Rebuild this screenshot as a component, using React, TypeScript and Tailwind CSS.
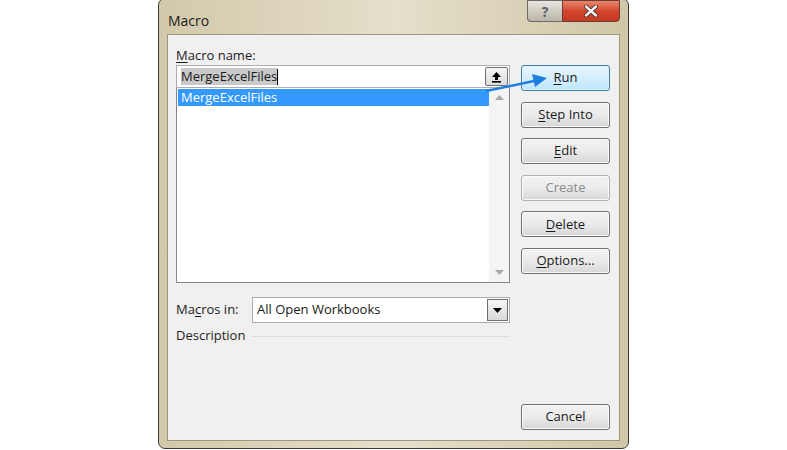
import React from 'react';

const font = { fontFamily: '"Open Sans", "Noto Sans", "Liberation Sans", sans-serif' };

const Btn = ({ children, primary, disabled }: { children: React.ReactNode; primary?: boolean; disabled?: boolean }) => (
  <div
    className={`h-[26px] w-[89px] rounded-[3px] border flex items-center justify-center text-[13px] ${
      primary
        ? 'border-[#3c7fb1] bg-gradient-to-b from-[#eaf6fd] to-[#bee6fd] shadow-[inset_0_0_0_1px_#dff2fc]'
        : 'border-[#707070] bg-gradient-to-b from-[#f2f2f2] via-[#ebebeb] to-[#d6d6d6] shadow-[inset_0_0_0_1px_#fafafa]'
    } ${disabled ? 'text-[#8a8a8a] border-[#adb2b5]' : 'text-[#1a1a1a]'}`}
  >
    {children}
  </div>
);

const U = ({ children }: { children: React.ReactNode }) => <span className="underline underline-offset-2">{children}</span>;

export default function App() {
  return (
    <div className="w-[787px] h-[450px] bg-white relative overflow-hidden" style={font}>
      <div className="absolute left-[158px] top-[-2px] w-[471px] h-[451px] rounded-[7px] border border-[#3a3a3a] bg-gradient-to-r from-[#d2c9ab] via-[#e6dfca] to-[#d0c7a8] flex flex-col">
        {/* title bar */}
        <div className="h-[35px] flex items-start justify-between pl-[9px] pr-[8px]">
          <div className="text-[14px] text-[#1b1b1b] mt-[11px]">Macro</div>
          <div className="flex mt-[1px]">
            <div className="w-[35px] h-[22px] rounded-bl-[4px] border border-[#6c6c6c] border-r-0 bg-gradient-to-b from-[#e8e6e0] to-[#b9b4a6] flex items-center justify-center text-[14px] font-bold text-[#5a5f6a]">?</div>
            <div className="w-[58px] h-[22px] rounded-br-[4px] border border-[#6c3a30] bg-gradient-to-b from-[#e8866c] via-[#d2462c] to-[#c43a22] flex items-center justify-center">
              <svg width="16" height="12" viewBox="0 0 16 12">
                <path d="M3 1.5 L13 10.5 M13 1.5 L3 10.5" stroke="#3a2a2a" strokeWidth="4" strokeLinecap="round" />
                <path d="M3 1.5 L13 10.5 M13 1.5 L3 10.5" stroke="#f4f4f4" strokeWidth="2.4" strokeLinecap="round" />
              </svg>
            </div>
          </div>
        </div>
        {/* client */}
        <div className="mx-[8px] h-[407px] border border-[#9c977f] bg-[#f0f0f0] flex gap-[11px] pl-[8px] pt-[10px] text-[13px] text-[#1a1a1a]">
          <div className="w-[334px] flex flex-col">
            <div className="h-[20px] leading-[20px]"><U>M</U>acro name:</div>
            <div className="h-[23px] border border-[#abadb3] bg-white flex items-center justify-between pl-[4px] pr-[1px]">
              <div className="flex items-center">
                <span className="bg-[#c9c9c9] leading-[17px]">MergeExcelFiles</span>
                <span className="w-[1px] h-[16px] bg-black" />
              </div>
              <div className="w-[23px] h-[19px] border border-[#707070] rounded-[2px] bg-gradient-to-b from-[#f6f6f6] to-[#dcdcdc] flex items-center justify-center">
                <svg width="11" height="12" viewBox="0 0 11 12">
                  <path d="M5.5 1 L10 6 H7 V9 H4 V6 H1 Z" fill="#000" />
                  <rect x="1" y="10" width="9" height="1.6" fill="#000" />
                </svg>
              </div>
            </div>
            <div className="h-[195px] border border-[#828790] border-t-0 bg-white flex">
              <div className="flex-1 pt-[1px] pl-[1px]">
                <div className="h-[17px] bg-[#3399ff] text-white leading-[17px] pl-[3px]">MergeExcelFiles</div>
              </div>
              <div className="w-[20px] bg-[#f4f4f4] flex flex-col items-center justify-between py-[7px]">
                <svg width="9" height="5" viewBox="0 0 9 5"><path d="M0 5 L4.5 0 L9 5 Z" fill="#a8a8a8" /></svg>
                <svg width="9" height="5" viewBox="0 0 9 5"><path d="M0 0 L4.5 5 L9 0 Z" fill="#a8a8a8" /></svg>
              </div>
            </div>
            <div className="mt-[14px] h-[26px] flex items-center">
              <div className="w-[76px]">Ma<U>c</U>ros in:</div>
              <div className="flex-1 h-[26px] border border-[#abadb3] bg-white flex items-center justify-between pl-[4px] pr-[1px]">
                <span>All Open Workbooks</span>
                <div className="w-[21px] h-[22px] border border-[#707070] bg-gradient-to-b from-[#f6f6f6] to-[#d8d8d8] flex items-center justify-center">
                  <svg width="9" height="5" viewBox="0 0 9 5"><path d="M0 0 L4.5 5 L9 0 Z" fill="#000" /></svg>
                </div>
              </div>
            </div>
            <div className="mt-[3px] h-[20px] flex items-center">
              <span className="text-[#1e1e1e]">Description</span>
              <div className="flex-1 ml-[6px] h-[1px] bg-[#d5dfe5]" />
            </div>
          </div>
          <div className="w-[89px] flex flex-col pt-[20px]">
            <div className="flex flex-col gap-[10.6px]">
              <Btn primary><U>R</U>un</Btn>
              <Btn><U>S</U>tep Into</Btn>
              <Btn><U>E</U>dit</Btn>
              <Btn disabled>Create</Btn>
              <Btn><U>D</U>elete</Btn>
              <Btn><U>O</U>ptions...</Btn>
            </div>
            <div className="mt-[130px]">
              <Btn>Cancel</Btn>
            </div>
          </div>
        </div>
      </div>
      <svg className="absolute left-0 top-0" width="787" height="450" viewBox="0 0 787 450">
        <path d="M486 91 Q510 86 534 81" stroke="#1f7ee0" strokeWidth="2.5" fill="none" />
        <path d="M547 78 L532 74 L535 87 Z" fill="#1f7ee0" />
      </svg>
    </div>
  );
}
